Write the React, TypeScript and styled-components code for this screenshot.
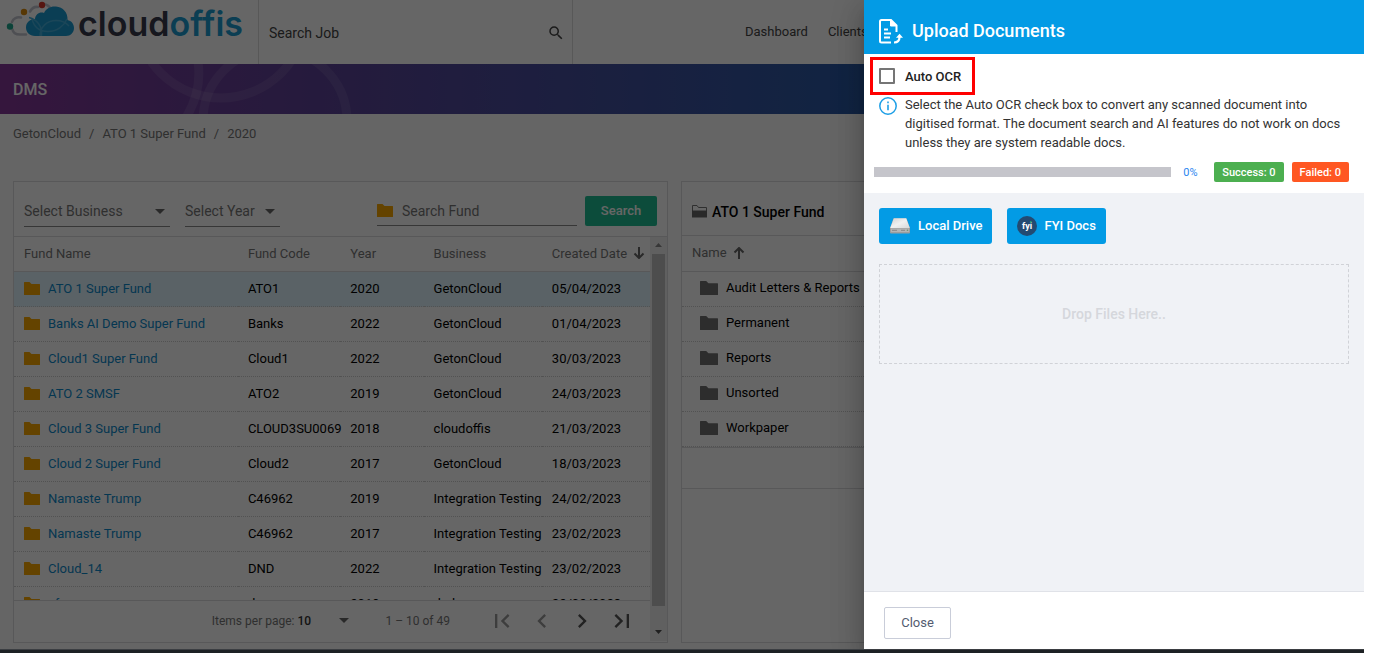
import React from "react";
import styled, { createGlobalStyle, css } from "styled-components";

const GlobalStyle = createGlobalStyle`
  *, *::before, *::after { box-sizing: border-box; }
  body {
    margin: 0;
    background: #fff;
    font-family: Roboto, "Liberation Sans", sans-serif;
    font-size: 13px;
    color: #000;
  }
  button, input, select { font: inherit; color: inherit; }
  a { color: inherit; text-decoration: none; }
`;

/* ---------- Frame ---------- */

const Screen = styled.div`
  display: flex;
  flex-direction: column;
  height: 100vh;
  margin-right: 35px;
`;

const Stage = styled.div`
  position: relative;
  flex: 1;
  min-height: 0;
  overflow: hidden;
  display: flex;
  flex-direction: column;
  background: #fdfdfd;
`;

const DesktopEdge = styled.div`
  height: 4px;
  background: #1d2124;
  border-top: 1px solid #3b3e42;
`;

/* ---------- Top bar ---------- */

const TopBar = styled.header`
  display: flex;
  flex: none;
  height: 64px;
  background: #fff;
`;

const Brand = styled.a`
  display: flex;
  align-items: flex-start;
  width: 258px;
  padding-left: 6px;
  font-family: Inter, "Liberation Sans", sans-serif;
  font-size: 34px;
  font-weight: 600;
  line-height: 48px;
  color: #373b4d;

  svg { flex: none; }
  b { font-weight: 600; color: #1c9bd0; }
`;

const JobSearch = styled.div`
  display: flex;
  align-items: center;
  width: 315px;
  padding: 2px 7px 0 10px;
  border: solid #ddd;
  border-width: 0 1px;

  input {
    flex: 1;
    min-width: 0;
    border: 0;
    padding: 0;
    outline: 0;
    background: none;
    font-size: 14px;
  }
  input::placeholder { color: #444; opacity: 1; }
`;

const Nav = styled.nav`
  display: flex;
  align-items: center;
  gap: 20px;
  padding: 0 0 2px 172px;
  color: #444;
`;

const Banner = styled.div`
  display: flex;
  flex: none;
  height: 50px;
  background: linear-gradient(90deg, #86379a 0, #6f3e9a 160px, #5f4298 300px, #43509f 600px, #2a5aa6 860px, #1b63ab 100%);

  h1 {
    margin: 0;
    width: 148px;
    padding-left: 13px;
    font-size: 16px;
    font-weight: 500;
    line-height: 52px;
    color: #fff;
  }
`;

const Crumbs = styled.nav`
  display: flex;
  flex: none;
  gap: 8px;
  padding: 10px 13px 0;
  height: 67px;
  line-height: 20px;
  color: #777;
`;

/* ---------- Cards ---------- */

const Columns = styled.main`
  flex: 1;
  min-height: 0;
  display: grid;
  grid-template-columns: 655fr 670fr;
  gap: 13px;
  padding: 0 13px 6px;
`;

const Card = styled.section`
  display: flex;
  flex-direction: column;
  min-width: 0;
  min-height: 0;
  border: 1px solid #dcdcde;
  background: #fff;
`;

const Filters = styled.form`
  display: flex;
  align-items: flex-start;
  flex: none;
  height: 55px;
  padding: 14px 10px 0;
  border-bottom: 1px solid #dcdcde;
`;

const SelectField = styled.label<{ $width: number }>`
  display: flex;
  align-items: center;
  width: ${(p) => p.$width}px;
  height: 31px;
  margin-right: 15px;
  border-bottom: 1px solid #8a8a8a;
  color: #777;

  select {
    flex: 1;
    min-width: 0;
    appearance: none;
    border: 0;
    padding: 0;
    background: none;
    font-size: 14px;
  }
  svg { flex: none; margin-right: 5px; }
`;

const FundSearch = styled.label`
  display: flex;
  align-items: center;
  gap: 9px;
  width: 200px;
  height: 30px;
  margin-left: auto;
  margin-right: 8px;
  border-bottom: 1px solid #8a8a8a;

  input {
    flex: 1;
    min-width: 0;
    border: 0;
    padding: 0;
    outline: 0;
    background: none;
    font-size: 14px;
  }
  input::placeholder { color: #777; opacity: 1; }
`;

const SearchButton = styled.button`
  width: 72px;
  height: 30px;
  padding: 0 0 2px;
  border: 0;
  border-radius: 2px;
  background: #1fbf94;
  color: #fff;
  font-weight: 500;
`;

const ListArea = styled.div`
  flex: 1;
  min-height: 0;
  display: flex;
`;

const ListMain = styled.div`
  flex: 1;
  min-width: 0;
  display: flex;
  flex-direction: column;
`;

const TableClip = styled.div`
  flex: 1;
  min-height: 0;
  overflow: hidden;
`;

const cellText = css`
  padding: 0 0 2px 10px;
  text-align: left;
  white-space: nowrap;
`;

const FundTable = styled.table`
  width: 100%;
  table-layout: fixed;
  border-collapse: separate;
  border-spacing: 0;

  th {
    ${cellText}
    height: 35px;
    border-bottom: 1px solid #dcdcde;
    font-weight: 400;
    color: #777;
  }
  td {
    ${cellText}
    height: 35px;
    border-bottom: 1px dotted #ccc;
  }
`;

const SortHeader = styled.span`
  display: flex;
  align-items: center;
  gap: 6px;
`;

const FundRow = styled.tr<{ $selected?: boolean }>`
  background: ${(p) => (p.$selected ? "#e1f5fe" : "transparent")};
`;

const FundLink = styled.a`
  display: flex;
  align-items: center;
  gap: 8px;
  color: #0d8acb;
`;

const ScrollTrack = styled.div`
  display: flex;
  flex-direction: column;
  align-items: center;
  justify-content: space-between;
  width: 17px;
  margin-bottom: 1px;
  padding: 6px 0 7px;
  background: #f1f1f1;
`;

const ScrollThumb = styled.div`
  width: 13px;
  height: 352px;
  margin-bottom: 18px;
  background: #c1c1c1;
`;

const Pager = styled.div`
  display: flex;
  align-items: center;
  justify-content: flex-end;
  flex: none;
  height: 42px;
  padding: 0 8px 2px 0;
  border-top: 1px solid #dcdcde;
  font-size: 12px;
  color: #777;
`;

const PageSize = styled.label`
  display: flex;
  align-items: center;
  margin-right: 36px;

  select {
    appearance: none;
    width: 42px;
    margin-left: 3px;
    border: 0;
    padding: 0;
    background: none;
    font-weight: 500;
    color: #333;
  }
`;

const PageRange = styled.span`
  margin-right: 32px;
`;

const PageButton = styled.button`
  display: flex;
  align-items: center;
  justify-content: center;
  width: 40px;
  height: 40px;
  border: 0;
  padding: 0;
  background: none;
  color: #555;

  &:disabled { color: #999; }
`;

const FolderTitle = styled.h2`
  display: flex;
  align-items: center;
  gap: 5px;
  flex: none;
  height: 54px;
  margin: 0;
  padding: 6px 10px 0;
  border-bottom: 1px solid #dcdcde;
  font-size: 14px;
  font-weight: 500;
`;

const FolderTable = styled.table`
  width: 100%;
  border-spacing: 0;
  border-bottom: 1px solid #dcdcde;

  th {
    ${cellText}
    height: 36px;
    border-bottom: 1px solid #dcdcde;
    font-weight: 400;
    color: #777;
  }
  td {
    height: 35px;
    padding: 0 18px;
    border-bottom: 1px dotted #ccc;
  }
  td a {
    display: flex;
    align-items: center;
    gap: 8px;
    line-height: 20px;
    padding-bottom: 2px;
  }
`;

const FolderFooter = styled.div`
  height: 41px;
  border-bottom: 1px solid #dcdcde;
`;

/* ---------- Drawer ---------- */

const Scrim = styled.div`
  position: absolute;
  inset: 0;
  background: rgba(0, 0, 0, 0.6);
`;

const Drawer = styled.aside`
  position: absolute;
  top: 0;
  right: 0;
  bottom: 0;
  width: 500px;
  display: flex;
  flex-direction: column;
  background: #fff;
  box-shadow: 0 8px 10px -5px rgba(0, 0, 0, 0.2), 0 16px 24px 2px rgba(0, 0, 0, 0.14), 0 6px 30px 5px rgba(0, 0, 0, 0.12);
`;

const DrawerHeader = styled.header`
  display: flex;
  align-items: center;
  gap: 9px;
  flex: none;
  height: 54px;
  padding: 8px 15px 0;
  background: #039be5;
  color: #fff;

  h2 {
    margin: 0;
    padding-bottom: 2px;
    font-size: 18px;
    font-weight: 500;
  }
`;

const Options = styled.div`
  display: flex;
  flex-direction: column;
  align-items: flex-start;
  padding: 3px 15px 11px 6px;
`;

const OcrOption = styled.label`
  display: flex;
  align-items: center;
  gap: 10px;
  height: 38px;
  padding: 0 11px 0 6px;
  border: 3px solid #ff0000;
  font-weight: 500;
  color: #222;

  input {
    appearance: none;
    width: 16px;
    height: 16px;
    margin: 0;
    border: 2px solid #757575;
    border-radius: 1px;
    background: #fff;
  }
`;

const Hint = styled.div`
  display: flex;
  gap: 8px;
  padding-left: 9px;
  color: #333;

  svg { flex: none; margin-top: 2px; }
  p { margin: 0; line-height: 19px; }
`;

const ProgressRow = styled.div`
  display: flex;
  align-items: center;
  align-self: stretch;
  gap: 8px;
  margin-top: 10px;
  padding-left: 4px;
  font-size: 11px;
`;

const ProgressBar = styled.div`
  flex: 1;
  height: 10px;
  background: #c5c5cb;
`;

const Percent = styled.span`
  width: 23px;
  margin-left: 4px;
  color: #2a86f0;
`;

const Badge = styled.span<{ $tone: string }>`
  padding: 1px 8px 0;
  border-radius: 2px;
  line-height: 19px;
  font-weight: 500;
  color: #fff;
  background: ${(p) => p.$tone};
`;

const Sources = styled.div`
  flex: 1;
  padding: 15px;
  background: #f0f2f6;
`;

const SourceButtons = styled.div`
  display: flex;
  gap: 15px;
`;

const SourceButton = styled.button`
  display: flex;
  align-items: center;
  gap: 7px;
  height: 36px;
  padding: 0 10px;
  border: 0;
  border-radius: 3px;
  background: #039be5;
  color: #fff;
  font-weight: 500;

  span { padding-bottom: 2px; }
`;

const DropZone = styled.div`
  display: flex;
  align-items: center;
  justify-content: center;
  height: 100px;
  margin-top: 20px;
  border: 1px dashed #d0d2d7;
  font-size: 14px;
  font-weight: 500;
  color: #d5d7dc;
`;

const DrawerFooter = styled.footer`
  flex: none;
  height: 58px;
  padding: 15px 20px 0;
  border-top: 1px solid #e0e2e8;
`;

const CloseButton = styled.button`
  width: 67px;
  height: 32px;
  padding: 0 0 2px;
  border: 1px solid #c9cdd9;
  border-radius: 2px;
  background: #fff;
  color: #535b70;
`;

/* ---------- Icons ---------- */

const CloudLogo = () => (
  <svg width="72" height="40" viewBox="6 0 72 40" fill="none" aria-hidden="true">
    <path d="M26 34.500H20C16 34.500 13 32.500 12.500 29.500M12 22C13 18.500 17 16.500 21 17.500M30 11.500C32 8 35 6.500 38 7M45.500 4.500C47.500 5 48.500 6 49.500 7" stroke="#c4c6cf" strokeWidth="2.600" strokeLinecap="round" />
    <path d="M35 36C29.500 36 26 32 26 27.500C26 22.500 30 18.800 35 19C35.500 14.500 39.500 11.500 44 13C46 8.500 50.500 6 56 6.500C63 7.200 68 12.500 67.500 20C71.500 20.800 74 24 74 28C74 32.500 70.500 36 66 36Z" fill="#1b9cd2" />
    <path d="M29 17.500C37 19.500 42.500 26 41.500 36M40 36C40 27 47 20.500 56 20.500C61 20.500 66 22.500 69 26M32 19C34 27 40 31.500 48 31.500C57 31.500 64 26 67 19" stroke="#45b0dc" strokeWidth="1.400" />
    <circle cx="10" cy="26.500" r="3.200" fill="#1ea88e" />
    <circle cx="24" cy="12" r="3.200" fill="#d98a0c" />
    <circle cx="42" cy="5" r="3.200" fill="#d8382c" />
  </svg>
);

const BannerRings = () => (
  <svg width="210" height="50" viewBox="148 64 210 50" fill="none" stroke="#fff" strokeOpacity="0.09" strokeWidth="9" aria-hidden="true">
    <circle cx="221" cy="13" r="85" />
    <circle cx="275" cy="121" r="72" />
    <path d="M198 62Q202 90 187 116" />
  </svg>
);

const SearchIcon = () => (
  <svg width="18" height="18" viewBox="0 0 24 24" fill="#444" aria-hidden="true">
    <path d="M15.500 14h-.79l-.28-.27A6.471 6.471 0 0 0 16 9.500 6.500 6.500 0 1 0 9.500 16c1.610 0 3.090-.59 4.230-1.570l.27.28v.79l5 4.990L20.490 19l-4.990-5zm-6 0C7.010 14 5 11.990 5 9.500S7.010 5 9.500 5 14 7.010 14 9.500 11.990 14 9.500 14z" />
  </svg>
);

const Caret = () => (
  <svg width="10" height="5" viewBox="0 0 10 5" fill="#666" aria-hidden="true">
    <path d="M0 0h10L5 5z" />
  </svg>
);

const Folder = ({ color = "#fba900", width = 16, height = 13 }) => (
  <svg width={width} height={height} viewBox="0 0 16 13" fill={color} preserveAspectRatio="none" aria-hidden="true">
    <path d="M0 .5Q0 0 .5 0H5.500L7.500 2H15.500Q16 2 16 2.500V12.500Q16 13 15.500 13H.5Q0 13 0 12.500Z" />
  </svg>
);

const OpenFolder = () => (
  <svg width="15" height="13" viewBox="0 0 15 13" aria-hidden="true">
    <path d="M.5 12V.5H5L6.500 2.500H14.500V12" fill="none" stroke="#777" />
    <path d="M0 5.500H15V12.500H0Z" fill="#666" />
  </svg>
);

const Arrow = ({ down = false }) => (
  <svg width="12" height="12" viewBox="0 0 12 12" fill="none" stroke="#666" strokeWidth="2" aria-hidden="true">
    <path d={down ? "M6 0V11M1.500 6.500L6 11L10.500 6.500" : "M6 12V1M1.500 5.500L6 1L10.500 5.500"} />
  </svg>
);

const pagerPaths = {
  first: "M18.410 16.590L13.820 12l4.590-4.590L17 6l-6 6 6 6zM6 6h2v12H6z",
  prev: "M15.410 7.410L14 6l-6 6 6 6 1.410-1.410L10.830 12z",
  next: "M10 6L8.590 7.410 13.170 12l-4.580 4.590L10 18l6-6z",
  last: "M5.590 7.410L10.180 12l-4.590 4.590L7 18l6-6-6-6zM16 6h2v12h-2z",
};

const PagerIcon = ({ name }: { name: keyof typeof pagerPaths }) => (
  <svg width="28" height="28" viewBox="0 0 24 24" fill="currentColor" aria-hidden="true">
    <path d={pagerPaths[name]} />
  </svg>
);

const ScrollArrow = ({ down = false }) => (
  <svg width="7" height="4" viewBox="0 0 7 4" fill={down ? "#505050" : "#8a8a8a"} aria-hidden="true">
    <path d={down ? "M0 0H7L3.500 4Z" : "M0 4H7L3.500 0Z"} />
  </svg>
);

const UploadDocIcon = () => (
  <svg width="24" height="25" viewBox="0 0 24 25" fill="none" stroke="#fff" aria-hidden="true">
    <path d="M12 23.500H2.500Q1 23.500 1 22V2.500Q1 1 2.500 1H12L17.500 6.500V13" strokeWidth="2" />
    <path d="M11.500 1V7H18Z" fill="#fff" strokeWidth="1" />
    <path d="M5 10.500H9M5 14.500H12M5 18.500H11" strokeWidth="1.800" />
    <path d="M15 23.500C18.500 23.500 20.500 21.500 20.500 18" strokeWidth="2.200" />
    <path d="M17 18.800L20.500 14.800L24 18.800Z" fill="#fff" stroke="none" />
  </svg>
);

const InfoIcon = () => (
  <svg width="18" height="18" viewBox="0 0 18 18" fill="none" aria-hidden="true">
    <circle cx="9" cy="9" r="8.200" stroke="#1e9fe6" strokeWidth="1.500" />
    <path d="M9 7.800V13.200M9 4.600V6.300" stroke="#1e9fe6" strokeWidth="1.600" />
  </svg>
);

const DriveIcon = () => (
  <svg width="22" height="18" viewBox="0 0 22 18" aria-hidden="true">
    <defs>
      <linearGradient id="driveTop" x1="0" y1="0" x2="1" y2="1">
        <stop offset="0" stopColor="#d2d2d2" />
        <stop offset="0.500" stopColor="#f0f0f0" />
        <stop offset="1" stopColor="#d8d8d8" />
      </linearGradient>
    </defs>
    <path d="M4.500 1.500H17.500L21 11V15.500Q21 16.500 20 16.500H2Q1 16.500 1 15.500V11Z" fill="#9d9d9d" />
    <path d="M4.800 1.300H17.200L20.800 11H1.200Z" fill="url(#driveTop)" />
    <path d="M2 11.500H20V15H2Z" fill="#b4b4b4" />
    <path d="M3 13.300H8M12 13.300H16" stroke="#868686" />
    <circle cx="18.500" cy="13.300" r="0.800" fill="#6c8f6c" />
  </svg>
);

const FyiIcon = () => (
  <svg width="20" height="20" viewBox="0 0 20 20" aria-hidden="true">
    <circle cx="10" cy="10" r="10" fill="#234a72" />
    <text x="10" y="13" textAnchor="middle" fontFamily="Roboto, sans-serif" fontSize="9" fontWeight="700" fill="#fff">fyi</text>
    <circle cx="13.800" cy="6" r="1" fill="#2c9a72" />
  </svg>
);

/* ---------- Data ---------- */

const funds = [
  ["ATO 1 Super Fund", "ATO1", "2020", "GetonCloud", "05/04/2023"],
  ["Banks AI Demo Super Fund", "Banks", "2022", "GetonCloud", "01/04/2023"],
  ["Cloud1 Super Fund", "Cloud1", "2022", "GetonCloud", "30/03/2023"],
  ["ATO 2 SMSF", "ATO2", "2019", "GetonCloud", "24/03/2023"],
  ["Cloud 3 Super Fund", "CLOUD3SU0069", "2018", "cloudoffis", "21/03/2023"],
  ["Cloud 2 Super Fund", "Cloud2", "2017", "GetonCloud", "18/03/2023"],
  ["Namaste Trump", "C46962", "2019", "Integration Testing", "24/02/2023"],
  ["Namaste Trump", "C46962", "2017", "Integration Testing", "23/02/2023"],
  ["Cloud_14", "DND", "2022", "Integration Testing", "23/02/2023"],
  ["sf", "ds", "2019", "dcd", "22/02/2023"],
];

const columnWidths = ["35.2%", "16.1%", "13.1%", "18.600%", "17%"];

const folders = ["Audit Letters & Reports", "Permanent", "Reports", "Unsorted", "Workpaper"];

/* ---------- Page ---------- */

const FundList = () => (
  <Card>
    <Filters onSubmit={(e) => e.preventDefault()}>
      <SelectField $width={146}>
        <select aria-label="Business"><option>Select Business</option></select>
        <Caret />
      </SelectField>
      <SelectField $width={95}>
        <select aria-label="Year"><option>Select Year</option></select>
        <Caret />
      </SelectField>
      <FundSearch>
        <Folder />
        <input type="text" placeholder="Search Fund" aria-label="Search Fund" />
      </FundSearch>
      <SearchButton type="submit">Search</SearchButton>
    </Filters>
    <ListArea>
      <ListMain>
        <TableClip>
          <FundTable>
            <colgroup>
              {columnWidths.map((width, i) => <col key={i} width={width} />)}
            </colgroup>
            <thead>
              <tr>
                <th>Fund Name</th>
                <th>Fund Code</th>
                <th>Year</th>
                <th>Business</th>
                <th><SortHeader>Created Date<Arrow down /></SortHeader></th>
              </tr>
            </thead>
            <tbody>
              {funds.map(([name, code, year, business, date], i) => (
                <FundRow key={i} $selected={i === 0}>
                  <td><FundLink href="#"><Folder />{name}</FundLink></td>
                  <td>{code}</td>
                  <td>{year}</td>
                  <td>{business}</td>
                  <td>{date}</td>
                </FundRow>
              ))}
            </tbody>
          </FundTable>
        </TableClip>
        <Pager>
          <PageSize>
            Items per page:
            <select><option>10</option></select>
            <Caret />
          </PageSize>
          <PageRange>1 – 10 of 49</PageRange>
          <PageButton disabled aria-label="First page"><PagerIcon name="first" /></PageButton>
          <PageButton disabled aria-label="Previous page"><PagerIcon name="prev" /></PageButton>
          <PageButton aria-label="Next page"><PagerIcon name="next" /></PageButton>
          <PageButton aria-label="Last page"><PagerIcon name="last" /></PageButton>
        </Pager>
      </ListMain>
      <ScrollTrack>
        <ScrollArrow />
        <ScrollThumb />
        <ScrollArrow down />
      </ScrollTrack>
    </ListArea>
  </Card>
);

const FolderList = () => (
  <Card>
    <FolderTitle><OpenFolder />ATO 1 Super Fund</FolderTitle>
    <FolderTable>
      <thead>
        <tr><th><SortHeader>Name<Arrow /></SortHeader></th></tr>
      </thead>
      <tbody>
        {folders.map((name) => (
          <tr key={name}>
            <td><a href="#"><Folder color="#707070" width={18} height={14} />{name}</a></td>
          </tr>
        ))}
      </tbody>
    </FolderTable>
    <FolderFooter />
  </Card>
);

const UploadDrawer = () => (
  <Drawer role="dialog" aria-label="Upload Documents">
    <DrawerHeader>
      <UploadDocIcon />
      <h2>Upload Documents</h2>
    </DrawerHeader>
    <Options>
      <OcrOption><input type="checkbox" />Auto OCR</OcrOption>
      <Hint>
        <InfoIcon />
        <p>
          Select the Auto OCR check box to convert any scanned document into digitised format. The
          document search and AI features do not work on docs unless they are system readable docs.
        </p>
      </Hint>
      <ProgressRow>
        <ProgressBar role="progressbar" aria-label="Upload progress" aria-valuenow={0} />
        <Percent>0%</Percent>
        <Badge $tone="#4caf50">Success: 0</Badge>
        <Badge $tone="#ff5722">Failed: 0</Badge>
      </ProgressRow>
    </Options>
    <Sources>
      <SourceButtons>
        <SourceButton><DriveIcon /><span>Local Drive</span></SourceButton>
        <SourceButton><FyiIcon /><span>FYI Docs</span></SourceButton>
      </SourceButtons>
      <DropZone>Drop Files Here..</DropZone>
    </Sources>
    <DrawerFooter>
      <CloseButton>Close</CloseButton>
    </DrawerFooter>
  </Drawer>
);

export default function App() {
  return (
    <>
      <GlobalStyle />
      <Screen>
        <Stage>
          <TopBar>
            <Brand href="#"><CloudLogo /><span>cloud<b>offis</b></span></Brand>
            <JobSearch>
              <input type="text" placeholder="Search Job" aria-label="Search Job" />
              <SearchIcon />
            </JobSearch>
            <Nav>
              <a href="#">Dashboard</a>
              <a href="#">Clients</a>
            </Nav>
          </TopBar>
          <Banner>
            <h1>DMS</h1>
            <BannerRings />
          </Banner>
          <Crumbs aria-label="Breadcrumb">
            <a href="#">GetonCloud</a>
            <span>/</span>
            <a href="#">ATO 1 Super Fund</a>
            <span>/</span>
            <span>2020</span>
          </Crumbs>
          <Columns>
            <FundList />
            <FolderList />
          </Columns>
          <Scrim />
          <UploadDrawer />
        </Stage>
        <DesktopEdge />
      </Screen>
    </>
  );
}
